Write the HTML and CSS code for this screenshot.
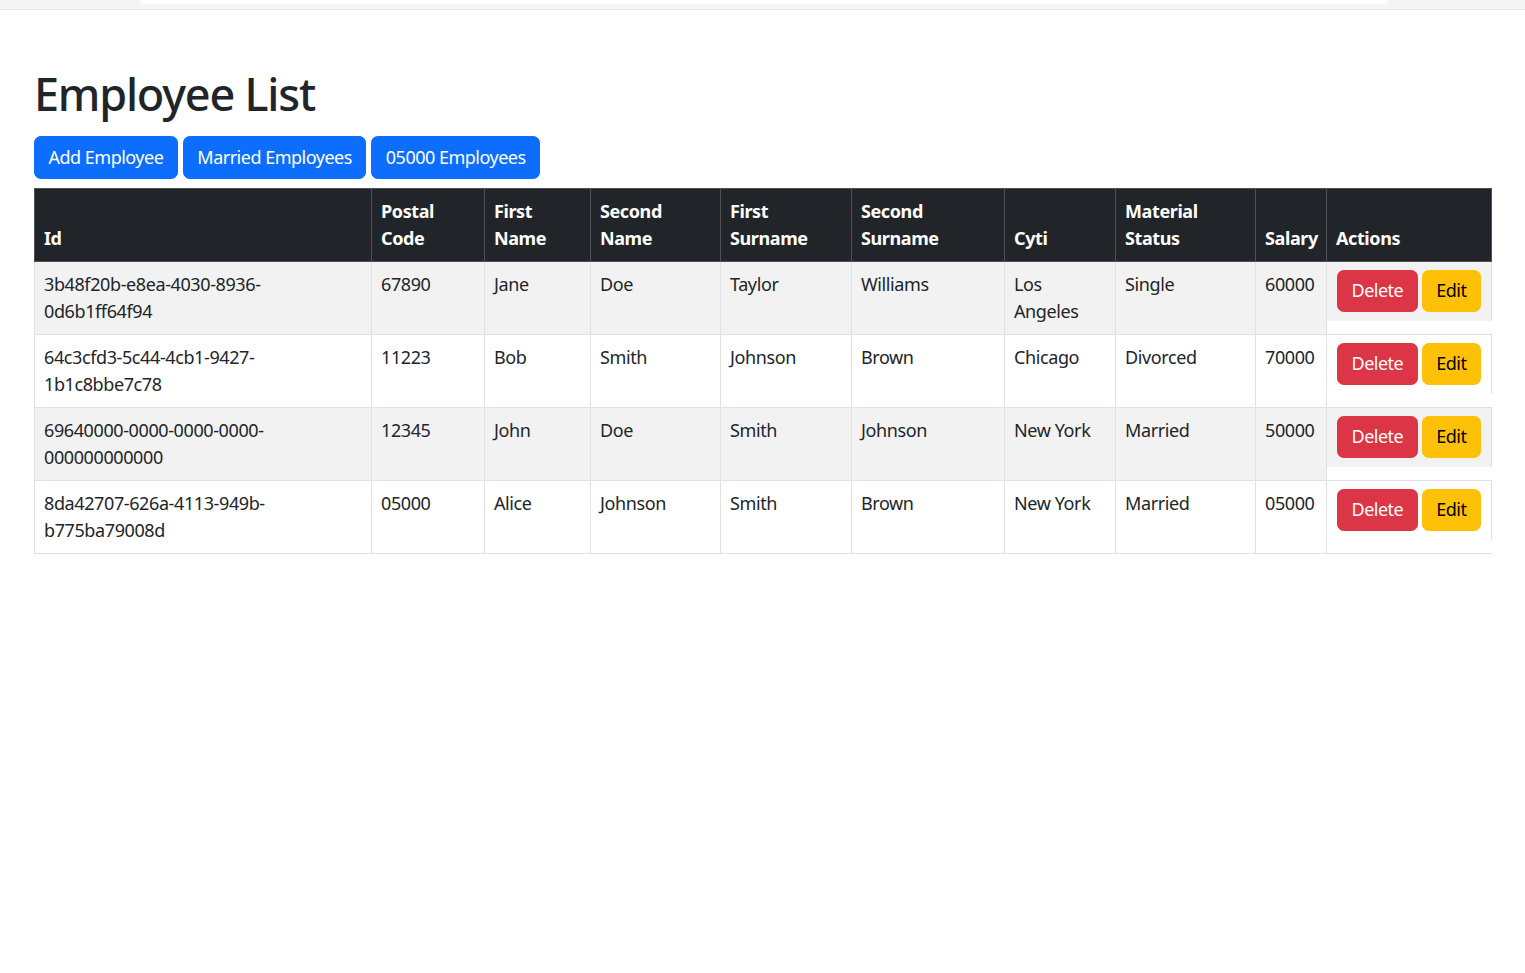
FILE: index.html
```html
<!DOCTYPE html>
<html lang="en">
<head>
<meta charset="utf-8">
<title>Employee List</title>
<link rel="stylesheet" href="styles.css">
</head>
<body>
<div class="topbar"><div class="topbar-inner"></div></div>
<div class="page">
  <h1 class="title">Employee List</h1>
  <div class="toolbar">
    <button class="btn btn-primary">Add Employee</button>
    <button class="btn btn-primary">Married Employees</button>
    <button class="btn btn-primary">05000 Employees</button>
  </div>
  <table class="emp-table">
    <colgroup>
      <col class="c-id"><col class="c-postal"><col class="c-fname"><col class="c-sname">
      <col class="c-fsur"><col class="c-ssur"><col class="c-city"><col class="c-status">
      <col class="c-salary"><col class="c-actions">
    </colgroup>
    <thead>
      <tr>
        <th>Id</th><th>Postal Code</th><th>First Name</th><th>Second Name</th><th>First Surname</th>
        <th>Second Surname</th><th>Cyti</th><th>Material Status</th><th>Salary</th><th>Actions</th>
      </tr>
    </thead>
    <tbody>
      <tr class="odd">
        <td>3b48f20b-e8ea-4030-8936-0d6b1ff64f94</td><td>67890</td><td>Jane</td><td>Doe</td><td>Taylor</td>
        <td>Williams</td><td>Los Angeles</td><td>Single</td><td>60000</td>
        <td class="actions"><div class="actions-box"><button class="btn btn-danger">Delete</button><button class="btn btn-warning">Edit</button></div></td>
      </tr>
      <tr>
        <td>64c3cfd3-5c44-4cb1-9427-1b1c8bbe7c78</td><td>11223</td><td>Bob</td><td>Smith</td><td>Johnson</td>
        <td>Brown</td><td>Chicago</td><td>Divorced</td><td>70000</td>
        <td class="actions"><div class="actions-box"><button class="btn btn-danger">Delete</button><button class="btn btn-warning">Edit</button></div></td>
      </tr>
      <tr class="odd">
        <td>69640000-0000-0000-0000-000000000000</td><td>12345</td><td>John</td><td>Doe</td><td>Smith</td>
        <td>Johnson</td><td>New York</td><td>Married</td><td>50000</td>
        <td class="actions"><div class="actions-box"><button class="btn btn-danger">Delete</button><button class="btn btn-warning">Edit</button></div></td>
      </tr>
      <tr>
        <td>8da42707-626a-4113-949b-b775ba79008d</td><td>05000</td><td>Alice</td><td>Johnson</td><td>Smith</td>
        <td>Brown</td><td>New York</td><td>Married</td><td>05000</td>
        <td class="actions"><div class="actions-box"><button class="btn btn-danger">Delete</button><button class="btn btn-warning">Edit</button></div></td>
      </tr>
    </tbody>
  </table>
</div>
</body>
</html>
```

FILE: styles.css
```css
* { box-sizing: border-box; }

body {
  margin: 0;
  background: #fff;
  color: #212529;
  font-family: "Noto Sans", "Open Sans", sans-serif;
  font-size: 18px;
  line-height: 27px;
  letter-spacing: -0.022em;
}

.topbar {
  height: 10px;
  background: #f3f4f6;
  border-bottom: 1px solid #e5e7eb;
  padding: 0 137px 0 140px;
}
.topbar-inner {
  height: 4px;
  background: #fff;
  border-radius: 0 0 6px 6px;
}

.page {
  padding: 0 34px 0 34px;
}

.title {
  margin: 57px 0 15px;
  font-size: 45px;
  line-height: 54px;
  font-weight: 500;
  letter-spacing: -0.027em;
  color: #212529;
}

.toolbar {
  display: flex;
  gap: 5px;
  margin-bottom: 9px;
}

.btn {
  display: inline-block;
  font-family: inherit;
  font-size: 18px;
  line-height: 27px;
  letter-spacing: -0.028em;
  padding: 6.75px 13.5px;
  border: 1px solid transparent;
  border-radius: 6.75px;
  cursor: pointer;
}
.btn-primary { background: #0d6efd; border-color: #0d6efd; color: #fff; }
.btn-danger { background: #dc3545; border-color: #dc3545; color: #fff; }
.btn-warning { background: #ffc107; border-color: #ffc107; color: #000; }

.emp-table {
  width: 1457px;
  table-layout: fixed;
  border-collapse: collapse;
}
.c-id { width: 337px; }
.c-postal { width: 113px; }
.c-fname { width: 106px; }
.c-sname { width: 130px; }
.c-fsur { width: 131px; }
.c-ssur { width: 153px; }
.c-city { width: 111px; }
.c-status { width: 140px; }
.c-salary { width: 71px; }
.c-actions { width: 165px; }

.emp-table th {
  background: #212529;
  color: #fff;
  font-weight: 700;
  text-align: left;
  vertical-align: bottom;
  padding: 9px;
  border: 1px solid #4d5154;
}

.emp-table td {
  vertical-align: top;
  padding: 9px;
  border: 1px solid #dee2e6;
}
.emp-table tr.odd td { background: #f2f2f2; }

.emp-table td.actions {
  padding: 0;
  border-right: none;
  background: none;
}
.emp-table tr.odd td.actions { background: none; }

.actions-box {
  display: flex;
  gap: 4px;
  padding: 8px 9px 9px 10px;
  border-right: 1px solid #dee2e6;
}
.emp-table tr.odd .actions-box { background: #f2f2f2; }
```
